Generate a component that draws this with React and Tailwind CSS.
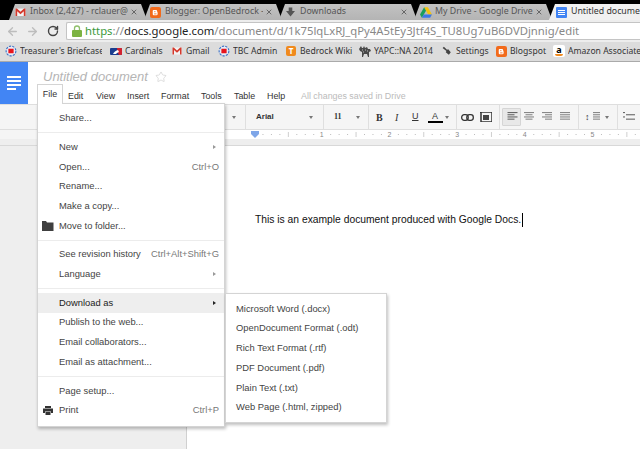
import React from 'react';
import { ArrowLeft, ArrowRight, RotateCw, Star, X } from 'lucide-react';

const GmailIcon = ({ size = 11 }) => (
  <svg width={size} height={size * 0.8} viewBox="0 0 20 16">
    <rect x="1" y="1" width="18" height="14" fill="#f3f3f3" />
    <path d="M1 15V1h2.500L10 7l6.500-6H19v14h-3V6l-6 5.500L4 6v9z" fill="#d5392c" />
  </svg>
);

const BloggerIcon = ({ size = 11 }) => (
  <svg width={size} height={size} viewBox="0 0 16 16">
    <rect width="16" height="16" rx="3" fill="#f26a1b" />
    <path d="M5 4.500h3.500a2 2 0 0 1 2 2v1h.6v2.500a2 2 0 0 1-2 2H5.500a1.500 1.500 0 0 1-1.500-1.500V5.500a1 1 0 0 1 1-1z" fill="#fff" />
    <path d="M6 6.800h2M6 10h3.500" stroke="#f26a1b" strokeWidth="1.200" />
  </svg>
);

const BriefcaseIcon = () => (
  <svg width="12" height="12" viewBox="0 0 16 16">
    <circle cx="8" cy="8" r="6.500" fill="#e8eef8" stroke="#3b6fc4" strokeWidth="1.500" strokeDasharray="3 1.500" />
    <rect x="4.500" y="5" width="7" height="6" fill="#e8141c" />
  </svg>
);

const DriveIcon = () => (
  <svg width="12" height="11" viewBox="0 0 16 14">
    <path d="M5.500 0h5L16 9.500h-5z" fill="#f4c20d" />
    <path d="M5.500 0 0 9.500 2.500 14 8 4.500z" fill="#1a9e5c" />
    <path d="M2.500 14h11L16 9.500H5z" fill="#3b78e7" />
  </svg>
);

const MlbIcon = () => (
  <svg width="12" height="7" viewBox="0 0 12 7">
    <rect width="12" height="7" rx="1" fill="#1b3d8f" />
    <path d="M7 0h4a1 1 0 0 1 1 1v5a1 1 0 0 1-1 1H9L7.500 4z" fill="#d3232f" />
    <path d="M3 6c1-2 2-3 5-4l1 2-2 1-1 1z" fill="#fff" />
  </svg>
);

const CamelIcon = () => (
  <svg width="12" height="12" viewBox="0 0 12 12">
    <path d="M0 4l2-3 1 2h1l1-2 1 2 2-1 1 2 2 0 1 2-2 1v5h-1l-1-3H5l-1 3H3V7L1 6z" fill="#4a4a4a" />
    <path d="M3 5h1M6 5h1M8 6h1M4 7h1" stroke="#dcdcdc" strokeWidth="0.800" />
  </svg>
);

const AmazonIcon = () => (
  <span className="relative flex h-3 w-3 items-start justify-center rounded-[2px] bg-white text-[9px] font-bold leading-[9px] text-black">
    a
    <span className="absolute bottom-px h-[2px] w-2 rounded-b-full bg-[#f08a1d]" />
  </span>
);

const Tab = ({ icon, title, active }) => (
  <div className={active
    ? "relative z-10 flex h-4 w-[110px] shrink-0 items-center -ml-[3px] pl-[4px] bg-[#f1f1f1] text-[#333] [clip-path:polygon(6px_0,100%_0,100%_100%,0_100%)]"
    : "flex h-4 w-[138px] shrink-0 items-center -ml-[3px] pl-[3px] bg-gradient-to-b from-[#c2c2c2] to-[#b4b4b4] text-[#555] [clip-path:polygon(6px_0,calc(100%-6px)_0,100%_100%,0_100%)]"}>
    <span className="ml-[1px] flex w-[15px] shrink-0 justify-center">{icon}</span>
    <span className="ml-[2px] w-[98px] shrink-0 overflow-hidden whitespace-nowrap">{title}</span>
    {!active && <X size={8} strokeWidth={2.5} className="ml-[2px] shrink-0 text-[#555]" />}
  </div>
);

const bookmarks = [
  { w: 105, tw: 82, pl: 5, icon: <BriefcaseIcon />, label: "Treasurer's Briefcase" },
  { w: 62, tw: 40, pl: 5, icon: <MlbIcon />, label: 'Cardinals' },
  { w: 46, tw: 30, pl: 4, icon: <GmailIcon size={10} />, label: 'Gmail' },
  { w: 67, tw: 47, pl: 5, icon: <BriefcaseIcon />, label: 'TBC Admin' },
  { w: 74, tw: 54, pl: 5, icon: <span className="flex h-[10px] w-[10px] items-center justify-center rounded-[2px] bg-[#f08a1d] text-[8px] font-bold leading-none text-white">T</span>, label: 'Bedrock Wiki' },
  { w: 83, tw: 63, pl: 5, icon: <CamelIcon />, label: 'YAPC::NA 2014' },
  { w: 54, tw: 35, pl: 4, icon: <svg width="10" height="10" viewBox="0 0 16 16"><path d="M1 3 3 1l5 5 2-1 4 5-3 4-5-4 1-2z" fill="#444" /></svg>, label: 'Settings' },
  { w: 57, tw: 38, pl: 4, icon: <BloggerIcon />, label: 'Blogspot' },
  { w: 92, tw: 76, pl: 5, icon: <AmazonIcon />, label: 'Amazon Associates' },
];

const Caret = ({ className = '' }) => (
  <span className={`block h-0 w-0 shrink-0 border-x-[2px] border-t-[3px] border-x-transparent border-t-[#777] ${className}`} />
);

const Sep = ({ ml }) => <span className={`h-[26px] w-px shrink-0 bg-[#dfdfdf] ${ml}`} />;

const Lines = ({ rows, box }) => (
  <svg width="12" height="10" viewBox="0 0 12 10" className="block">
    {rows.map(([x, w], i) => (
      <rect key={i} x={x} y={i * 2.2} width={w} height="1.100" fill={box ? '#666' : '#888'} />
    ))}
  </svg>
);

const menuGroups = [
  [{ label: 'Share...' }],
  [
    { label: 'New', arrow: true },
    { label: 'Open...', hint: 'Ctrl+O' },
    { label: 'Rename...' },
    { label: 'Make a copy...' },
    {
      label: 'Move to folder...',
      icon: <svg width="12" height="10" viewBox="0 0 12 10"><path d="M0 0h4l1 1.500h6.500V10H0z" fill="#3f3f3f" /></svg>,
    },
  ],
  [
    { label: 'See revision history', hint: 'Ctrl+Alt+Shift+G' },
    { label: 'Language', arrow: true },
  ],
  [
    { label: 'Download as', arrow: true, active: true },
    { label: 'Publish to the web...' },
    { label: 'Email collaborators...' },
    { label: 'Email as attachment...' },
  ],
  [
    { label: 'Page setup...' },
    {
      label: 'Print',
      hint: 'Ctrl+P',
      icon: <svg width="10" height="9" viewBox="0 0 10 9"><path d="M2 0h6v2H2zM0 2.500h10V7H8V5.500H2V7H0zM2.500 6h5v3h-5z" fill="#333" /></svg>,
    },
  ],
];

const MenuItem = ({ item }) => (
  <div className={`flex h-[19.7px] items-center pr-[5px] ${item.active ? 'bg-[#eeeeee] text-[#222]' : ''}`}>
    <span className="flex w-[21px] shrink-0 justify-center pr-[1px]">{item.icon}</span>
    <span className="flex-1 whitespace-nowrap">{item.label}</span>
    {item.hint && <span className="text-[#777]">{item.hint}</span>}
    {item.arrow && (
      <span className={`mr-[3px] block h-0 w-0 border-y-[2px] border-l-[3px] border-y-transparent ${item.active ? 'border-l-[#222]' : 'border-l-[#999]'}`} />
    )}
  </div>
);

const App = () => {
  const ticks = [];
  for (let i = 0; i < 7; i++) {
    for (let j = 1; j < 8; j++) {
      if (j === 4) continue;
      ticks.push(254 + i * 67.7 + j * 8.46);
    }
  }
  const halves = [0, 1, 2, 3, 4, 5, 6].map((i) => 254 + i * 67.7 + 33.85);
  const menuNames = ['Edit', 'View', 'Insert', 'Format', 'Tools', 'Table', 'Help'];

  return (
    <div className="relative h-[449px] w-[640px] overflow-hidden bg-white font-['Liberation_Sans',Arial,sans-serif]">
      {/* Window tabs */}
      <div className="flex h-5 items-end bg-black pl-[12px] font-['Noto_Sans',sans-serif] text-[8.8px]">
        <Tab icon={<GmailIcon />} title="Inbox (2,427) - rclauer@g" />
        <Tab icon={<BloggerIcon />} title="Blogger: OpenBedrock -" />
        <Tab icon={<svg width="9" height="10" viewBox="0 0 10 10"><path d="M3 0h4v4h3L5 10 0 4h3z" fill="#555" /></svg>} title="Downloads" />
        <Tab icon={<DriveIcon />} title="My Drive - Google Drive" />
        <Tab active icon={<span className="flex h-[11px] w-[11px] flex-col justify-center gap-px rounded-[1px] bg-[#4285f4] px-[2px]"><span className="h-px bg-white" /><span className="h-px bg-white" /><span className="h-px bg-white" /></span>} title="Untitled document" />
      </div>

      {/* Address bar */}
      <div className="flex h-[22px] items-center bg-[#ededed] pl-[6px] pr-0">
        <ArrowLeft size={13} strokeWidth={2.5} className="text-[#bdbdbd]" />
        <ArrowRight size={13} strokeWidth={2.5} className="ml-[7px] text-[#bdbdbd]" />
        <RotateCw size={12} strokeWidth={2.8} className="ml-[8px] text-[#444]" />
        <div className="ml-[7px] flex h-[18px] flex-1 items-center rounded-l-[2px] border border-r-0 border-[#c4c4c4] bg-white pl-[5px] font-['Noto_Sans',sans-serif] text-[11.3px] whitespace-nowrap text-[#888]">
          <svg width="10" height="12" viewBox="0 0 10 12" className="shrink-0">
            <path d="M2.500 5V3.500a2.500 2.500 0 0 1 5 0V5" fill="none" stroke="#8fbf6b" strokeWidth="1.300" />
            <rect y="5" width="10" height="7" rx="1" fill="#7cb342" />
          </svg>
          <span className="ml-[3px]"><span className="text-[#3c9a3c]">https</span>://<span className="text-[#222]">docs.google.com</span>/document/d/1k75lqLxRJ_qPy4A5tEy3Jtf4S_TU8Ug7uB6DVDjnnig/edit</span>
        </div>
      </div>

      {/* Bookmarks */}
      <div className="flex h-5 items-center overflow-hidden border-b border-[#aaaaaa] bg-[#dcdcdc] font-['Noto_Sans',sans-serif] text-[8.6px] text-[#333]">
        {bookmarks.map((b) => (
          <div key={b.label} style={{ width: b.w, paddingLeft: b.pl }} className="flex shrink-0 items-center gap-[3px]">
            <span className="flex w-[12px] shrink-0 justify-center">{b.icon}</span>
            <span style={{ width: b.tw }} className="shrink-0 overflow-hidden whitespace-nowrap">{b.label}</span>
          </div>
        ))}
      </div>

      {/* Docs header */}
      <div className="flex h-[42px] bg-white">
        <div className="flex w-[28px] shrink-0 flex-col justify-center gap-[2px] bg-[#4285f4] px-[7px]">
          <span className="h-[2px] bg-white" />
          <span className="h-[2px] bg-white" />
          <span className="h-[2px] bg-white" />
          <span className="h-[2px] w-[9px] bg-white" />
        </div>
        <div className="min-w-0 flex-1 pl-[15px]">
          <div className="mt-[6px] flex h-[17px] items-center text-[13px] italic text-[#b5b5b5]">
            Untitled document
            <Star size={12} strokeWidth={1.2} className="ml-[7px] text-[#c8c8c8]" />
          </div>
          <div className="mt-[2px] flex h-[19px] items-center text-[8.9px] text-[#333]">
            <span className="w-[25px]" />
            {menuNames.map((m, i) => (
              <span key={m} className={['w-[28px]', 'w-[31px]', 'w-[34px]', 'w-[40px]', 'w-[33px]', 'w-[33px]', 'w-[34px]'][i]}>{m}</span>
            ))}
            <span className="whitespace-nowrap text-[#bbbbbb]">All changes saved in Drive</span>
          </div>
        </div>
      </div>

      {/* Format toolbar */}
      <div className="flex h-[26px] items-center border-y border-[#dedede] bg-[#f5f5f5] text-[8px] text-[#333]">
        <Caret className="ml-[232px]" />
        <Sep ml="ml-[9px]" />
        <span className="ml-[10px] w-[53px] shrink-0 font-bold">Arial</span>
        <Caret />
        <Sep ml="ml-[10px]" />
        <span className="ml-[10px] w-[17px] shrink-0 font-['Liberation_Serif',serif] font-bold">11</span>
        <Caret className="ml-[5px]" />
        <Sep ml="ml-[8px]" />
        <span className="ml-[7px] w-[12px] shrink-0 font-['Liberation_Serif',serif] text-[10px] font-bold">B</span>
        <span className="ml-[7px] w-[12px] shrink-0 font-['Liberation_Serif',serif] text-[10px] italic">I</span>
        <span className="ml-[5px] w-[12px] shrink-0 text-[9px] underline">U</span>
        <span className="ml-[3px] flex w-[16px] shrink-0 flex-col items-center text-[9px] leading-[10px]">
          A
          <span className="h-[2px] w-[15px] bg-black" />
        </span>
        <Caret className="ml-[2px]" />
        <Sep ml="ml-[7px]" />
        <svg width="13" height="7" viewBox="0 0 13 7" className="ml-[4px] shrink-0">
          <rect x="0.700" y="0.700" width="6.500" height="5.600" rx="2.500" fill="none" stroke="#333" strokeWidth="1.300" />
          <rect x="5.800" y="0.700" width="6.500" height="5.600" rx="2.500" fill="none" stroke="#333" strokeWidth="1.300" />
        </svg>
        <svg width="12" height="10" viewBox="0 0 12 10" className="ml-[6px] shrink-0">
          <path d="M0 0h12v10H1V1z" fill="none" stroke="#333" strokeWidth="1.500" />
          <rect x="3" y="3" width="6" height="5" fill="#444" />
        </svg>
        <Sep ml="ml-[7px]" />
        <span className="ml-[2px] flex h-[18px] w-[19px] shrink-0 items-center justify-center rounded-[1px] border border-[#d5d5d5] bg-[#e8e8e8]">
          <Lines box rows={[[1.500, 10], [1.500, 7], [1.500, 10], [1.500, 7]]} />
        </span>
        <span className="ml-[2px] shrink-0"><Lines rows={[[1, 10], [2.500, 7], [1, 10], [2.500, 7]]} /></span>
        <span className="ml-[6px] shrink-0"><Lines rows={[[1, 10], [4, 7], [1, 10], [4, 7]]} /></span>
        <span className="ml-[6px] shrink-0"><Lines rows={[[1, 10], [1, 10], [1, 10], [1, 10]]} /></span>
        <Sep ml="ml-[7px]" />
        <span className="ml-[6px] flex shrink-0 items-center gap-[1px]">
          <span className="text-[9px] leading-none text-[#333]">↕</span>
          <Lines rows={[[2, 7], [2, 7], [2, 7], [2, 7]]} />
        </span>
        <Caret className="ml-[2px]" />
        <Sep ml="ml-[8px]" />
        <span className="ml-[5px] shrink-0"><Lines box rows={[[0, 2], [3, 9], [0, 2], [3, 9]]} /></span>
        <Caret className="ml-[5px]" />
      </div>

      {/* Ruler */}
      <div className="h-[9px] bg-white">
        <svg width="640" height="9" viewBox="0 0 640 9" className="block">
          <rect width="225" height="9" fill="#f5f5f5" />
          {ticks.map((x) => <rect key={x} x={x} y="4" width="1" height="1" fill="#bdbdbd" />)}
          {halves.map((x) => <rect key={x} x={x} y="2" width="1" height="5" fill="#cfcfcf" />)}
          {[1, 2, 3, 4, 5].map((n) => (
            <text key={n} x={254 + n * 67.7} y="7" fontSize="7" textAnchor="middle" fill="#888">{n}</text>
          ))}
          <path d="M251 1h8v3l-4 4-4-4z" fill="#7ea6e8" />
        </svg>
      </div>
      <div className="h-[7px] border-b border-[#d8d8d8] bg-[#eeeeee]" />

      {/* Document area */}
      <div className="flex h-[303px]">
        <div className="w-[187px] shrink-0 border-r border-[#d0d0d0] bg-[#eeeeee]" />
        <div className="flex-1 bg-white pl-[68px] pt-[67px]">
          <p className="flex h-[14px] items-center whitespace-nowrap text-[10.3px] text-[#111]">
            This is an example document produced with Google Docs.
            <span className="ml-px h-[14px] w-px bg-black" />
          </p>
        </div>
      </div>

      {/* File menu, open */}
      <div className="absolute left-[37px] top-[103px] w-[188px] border border-[#d4d4d4] bg-white pb-[5.5px] pt-[4.5px] text-[9.4px] text-[#444] shadow-[1px_2px_3px_rgba(0,0,0,0.25)]">
        {menuGroups.map((group, i) => (
          <div key={i} className={i > 0 ? 'mt-[4px] border-t border-[#ececec] pt-[4px]' : ''}>
            {group.map((item) => <MenuItem key={item.label} item={item} />)}
          </div>
        ))}
      </div>
      <div className="absolute left-[37px] top-[84px] flex h-[20px] w-[26px] items-center justify-center border border-b-0 border-[#d4d4d4] bg-white text-[8.9px] text-[#333]">File</div>

      {/* Download as submenu */}
      <div className="absolute left-[225px] top-[293px] w-[162px] border border-[#d4d4d4] bg-white py-[5px] pl-[10px] text-[9.4px] text-[#444] shadow-[1px_2px_3px_rgba(0,0,0,0.25)]">
        {['Microsoft Word (.docx)', 'OpenDocument Format (.odt)', 'Rich Text Format (.rtf)', 'PDF Document (.pdf)', 'Plain Text (.txt)', 'Web Page (.html, zipped)'].map((label) => (
          <div key={label} className="flex h-[19.7px] items-center whitespace-nowrap">{label}</div>
        ))}
      </div>
    </div>
  );
};

export default App;
